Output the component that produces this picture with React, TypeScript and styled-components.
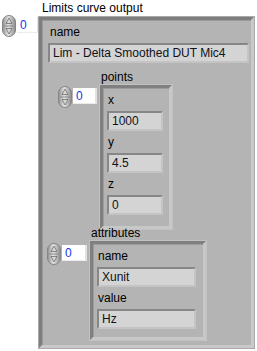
import styled, { createGlobalStyle } from "styled-components";

const GlobalStyle = createGlobalStyle`
  html, body {
    margin: 0;
    padding: 0;
    background: #ffffff;
    overflow: hidden;
  }
  body {
    font-family: "Liberation Sans", Arial, sans-serif;
    font-size: 12px;
    color: #000;
  }
`;

function Spinner() {
  return (
    <SpinnerSvg width="14" height="22" viewBox="0 0 14 22">
      <defs>
        <linearGradient id="spin" x1="0" x2="1" y1="0" y2="0">
          <stop offset="0" stopColor="#8e8e8e" />
          <stop offset="0.45" stopColor="#e6e6e6" />
          <stop offset="1" stopColor="#8a8a8a" />
        </linearGradient>
      </defs>
      <rect x="0.5" y="0.5" width="13" height="21" rx="6.5" fill="url(#spin)" stroke="#858585" />
      <line x1="1.5" y1="11" x2="12.5" y2="11" stroke="#8c8c8c" />
      <polygon points="7,3 10,8.5 4,8.5" fill="#d8d8d8" stroke="#6e6e6e" strokeWidth="0.8" />
      <polygon points="7,19 10,13.5 4,13.5" fill="#d8d8d8" stroke="#6e6e6e" strokeWidth="0.8" />
    </SpinnerSvg>
  );
}

function IndexControl({ top, width }: { top: number; width: number }) {
  return (
    <IndexWrap $top={top}>
      <Spinner />
      <IndexBox $width={width}>0</IndexBox>
    </IndexWrap>
  );
}

function App() {
  return (
    <Page>
      <GlobalStyle />
      <IndexControl top={14} width={22} />
      <Column>
        <Label $indent={3}>Limits curve output</Label>
        <OuterCluster>
          <Label $indent={2}>name</Label>
          <StringBox $width={201}>Lim - Delta Smoothed DUT Mic4</StringBox>

          <ArrayBlock $gap={7}>
            <Label $indent={53}>points</Label>
            <ArrayRow $indent={10}>
              <IndexControl top={1} width={24} />
              <ElementFrame $width={72} $pad={4} $bottom={11}>
                <Label $indent={1}>x</Label>
                <StringBox $width={56}>1000</StringBox>
                <Label $indent={1}>y</Label>
                <StringBox $width={56}>4.5</StringBox>
                <Label $indent={1}>z</Label>
                <StringBox $width={56}>0</StringBox>
              </ElementFrame>
            </ArrayRow>
          </ArrayBlock>

          <ArrayBlock $gap={1}>
            <Label $indent={43}>attributes</Label>
            <ArrayRow $indent={-1}>
              <IndexControl top={2} width={25} />
              <ElementFrame $width={116} $pad={4} $bottom={8}>
                <Label $indent={1}>name</Label>
                <StringBox $width={99}>Xunit</StringBox>
                <Label $indent={1}>value</Label>
                <StringBox $width={99}>Hz</StringBox>
              </ElementFrame>
            </ArrayRow>
          </ArrayBlock>
        </OuterCluster>
      </Column>
    </Page>
  );
}

export default App;

const Page = styled.div`
  display: flex;
  align-items: flex-start;
  padding: 1px 0 0 2px;
  width: 257px;
  height: 351px;
  box-sizing: border-box;
`;

const Column = styled.div`
  display: flex;
  flex-direction: column;
`;

const Label = styled.div<{ $indent?: number }>`
  height: 14px;
  line-height: 14px;
  padding-left: ${(p) => p.$indent ?? 0}px;
  white-space: nowrap;
  color: #000;
`;

const IndexWrap = styled.div<{ $top: number }>`
  display: flex;
  align-items: flex-start;
  margin-top: ${(p) => p.$top}px;
  flex-shrink: 0;
`;

const SpinnerSvg = styled.svg`
  display: block;
`;

const IndexBox = styled.div<{ $width: number }>`
  width: ${(p) => p.$width}px;
  height: 16px;
  margin-top: 2px;
  margin-left: 1px;
  box-sizing: border-box;
  background: #ffffff;
  border-right: 2px solid #e2e2e2;
  border-bottom: 1px solid #ececec;
  padding-left: 3px;
  line-height: 16px;
  color: #1636e8;
`;

const OuterCluster = styled.div`
  width: 215px;
  height: 331px;
  box-sizing: border-box;
  margin-top: 2px;
  background: #b4b4b4;
  border: 3px solid;
  border-color: #7e7e7e #c9c9c9 #c9c9c9 #7e7e7e;
  box-shadow: 0 0 0 1px #a9a9a9, inset 1px 1px 0 #9b9b9b;
  padding: 5px 6px 0 6px;
  display: flex;
  flex-direction: column;
`;

const StringBox = styled.div<{ $width: number }>`
  width: ${(p) => p.$width}px;
  height: 20px;
  box-sizing: border-box;
  margin-top: 4px;
  margin-bottom: 4px;
  background: #d4d4d4;
  border: 2px solid;
  border-color: #878787 #c4c4c4 #c4c4c4 #878787;
  padding-left: 3px;
  line-height: 16px;
  color: #111118;
  white-space: nowrap;
  overflow: hidden;
`;

const ArrayBlock = styled.div<{ $gap: number }>`
  margin-top: ${(p) => p.$gap - 4}px;
  display: flex;
  flex-direction: column;
`;

const ArrayRow = styled.div<{ $indent: number }>`
  display: flex;
  align-items: flex-start;
  gap: 3px;
  margin-top: 1px;
  margin-left: ${(p) => p.$indent}px;
`;

const ElementFrame = styled.div<{ $width: number; $pad: number; $bottom: number }>`
  width: ${(p) => p.$width}px;
  box-sizing: border-box;
  background: #b4b4b4;
  border: 3px solid;
  border-color: #808080 #c8c8c8 #c8c8c8 #808080;
  box-shadow: 0 0 0 1px #c2c2c2, inset 1px 1px 0 #9c9c9c;
  padding: 5px ${(p) => p.$pad}px ${(p) => p.$bottom - 4}px ${(p) => p.$pad}px;
  display: flex;
  flex-direction: column;
`;
